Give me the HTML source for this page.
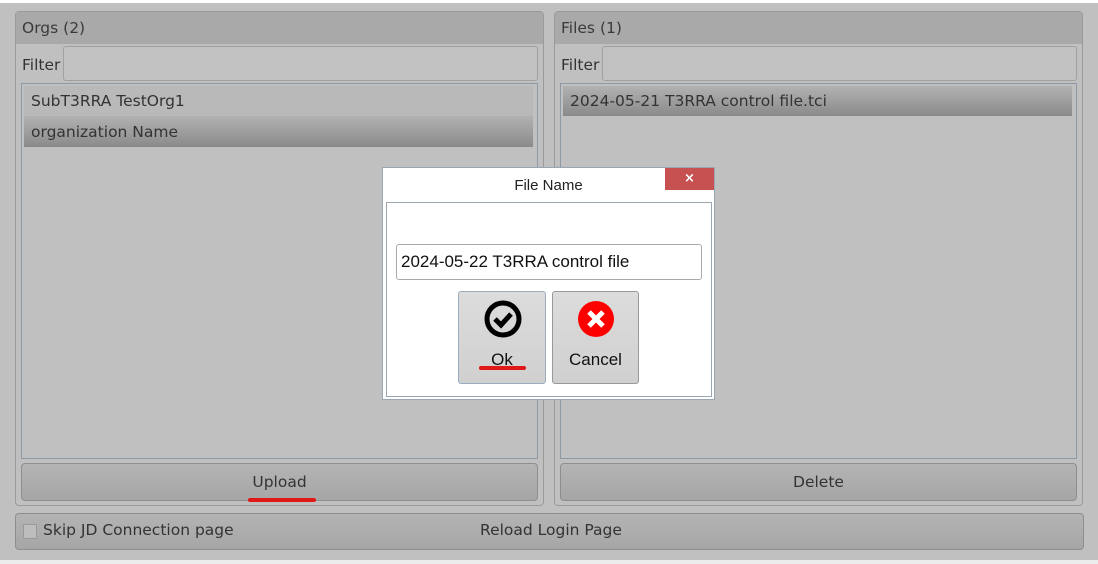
<!DOCTYPE html>
<html><head><style>
*{box-sizing:border-box;margin:0;padding:0}
body{width:1098px;height:564px;background:#c0c0c0;font-family:"DejaVu Sans","Liberation Sans",sans-serif;font-size:15.5px;color:#333;position:relative;overflow:hidden}
.a{position:absolute}
.panel{border:1px solid #9a9a9a;border-radius:4px;background:#c0c0c0}
.hdr{background:#a9a9a9;left:0;right:0;top:0;height:32px;padding:7px 6px;color:#3a3a3a}
.inp{border:1px solid #a0a0a0;border-radius:3px;background:#c2c2c2}
.list{border:1px solid #8e99a6;background:#c0c0c0}
.btn{border:1px solid #8e8e8e;border-radius:4px;background:linear-gradient(#b4b4b4,#a6a6a6);text-align:center;color:#333;padding-top:9px}
.sel{background:linear-gradient(#b2b2b2,#8a8a8a)}
</style></head><body>
<div class="a" style="left:0;top:0;width:1098px;height:3px;background:#fff"></div>
<div class="a panel" style="left:15px;top:11px;width:529px;height:495px">
 <div class="a hdr">Orgs (2)</div>
 <div class="a" style="left:6px;top:44px">Filter</div>
 <div class="a inp" style="left:47px;top:34px;width:475px;height:35px"></div>
 <div class="a list" style="left:5px;top:71px;width:517px;height:376px">
  <div class="a" style="left:2px;top:2px;width:509px;height:30px;background:#b9b9b9;padding:6px 7px">SubT3RRA TestOrg1</div>
  <div class="a sel" style="left:2px;top:32px;width:509px;height:31px;padding:7px 7px">organization Name</div>
 </div>
 <div class="a btn" style="left:5px;top:451px;width:517px;height:38px">Upload</div>
 <div class="a" style="left:232px;top:486px;width:68px;height:4px;background:#e01818;border-radius:2px"></div>
</div>
<div class="a panel" style="left:554px;top:11px;width:529px;height:495px">
 <div class="a hdr">Files (1)</div>
 <div class="a" style="left:6px;top:44px">Filter</div>
 <div class="a inp" style="left:47px;top:34px;width:475px;height:35px"></div>
 <div class="a list" style="left:5px;top:71px;width:517px;height:376px">
  <div class="a sel" style="left:2px;top:2px;width:509px;height:30px;padding:6px 7px">2024-05-21 T3RRA control file.tci</div>
 </div>
 <div class="a btn" style="left:5px;top:451px;width:517px;height:38px">Delete</div>
</div>
<div class="a btn" style="left:15px;top:513px;width:1069px;height:37px;text-align:left;padding:7px 0 0 0">
 <div class="a" style="left:7px;top:10px;width:14px;height:15px;border:1px solid #999;background:#bdbdbd"></div>
 <div class="a" style="left:27px;top:7px">Skip JD Connection page</div>
 <div class="a" style="left:464px;top:7px">Reload Login Page</div>
</div>
<div class="a" style="left:0;top:560px;width:1098px;height:4px;background:#ececec"></div>
<div class="a" style="left:382px;top:167px;width:333px;height:233px;background:#fff;border:1px solid #9aa6b3">
 <div class="a" style="left:0;right:0;top:9px;text-align:center;font-family:'Liberation Sans',sans-serif;font-size:15px;color:#222">File Name</div>
 <div class="a" style="left:282px;top:0;width:49px;height:22px;background:#c75050;color:#fff;text-align:center;font-size:13px;font-weight:bold;line-height:22px">×</div>
 <div class="a" style="left:3px;top:34px;width:326px;height:195px;border:1px solid #9aa6b3"></div>
 <div class="a" style="left:13px;top:76px;width:306px;height:36px;border:1px solid #aaa;border-radius:3px;padding:7px 4px;font-family:'Liberation Sans',sans-serif;font-size:17px;color:#111">2024-05-22 T3RRA control file</div>
 <div class="a" style="left:75px;top:123px;width:88px;height:93px;border:1px solid #9aaebf;border-radius:3px;background:linear-gradient(#dcdcdc,#d0d0d0)">
  <svg class="a" style="left:25px;top:8px" width="38" height="38" viewBox="0 0 38 38"><circle cx="19" cy="19" r="16" fill="none" stroke="#000" stroke-width="5"/><path d="M11 19l6 6 10-11" fill="none" stroke="#000" stroke-width="5"/></svg>
  <div class="a" style="left:0;right:0;top:58px;text-align:center;font-family:'Liberation Sans',sans-serif;font-size:17px;color:#111">Ok</div>
  <div class="a" style="left:20px;top:74px;width:47px;height:4px;background:#e01818;border-radius:2px"></div>
 </div>
 <div class="a" style="left:169px;top:123px;width:87px;height:93px;border:1px solid #999;border-radius:3px;background:linear-gradient(#dcdcdc,#d0d0d0)">
  <svg class="a" style="left:24px;top:8px" width="38" height="38" viewBox="0 0 38 38"><circle cx="19" cy="19" r="18" fill="#f00"/><path d="M12 12l14 14M26 12l-14 14" stroke="#fff" stroke-width="5"/></svg>
  <div class="a" style="left:0;right:0;top:58px;text-align:center;font-family:'Liberation Sans',sans-serif;font-size:17px;color:#111">Cancel</div>
 </div>
</div>
</body></html>
